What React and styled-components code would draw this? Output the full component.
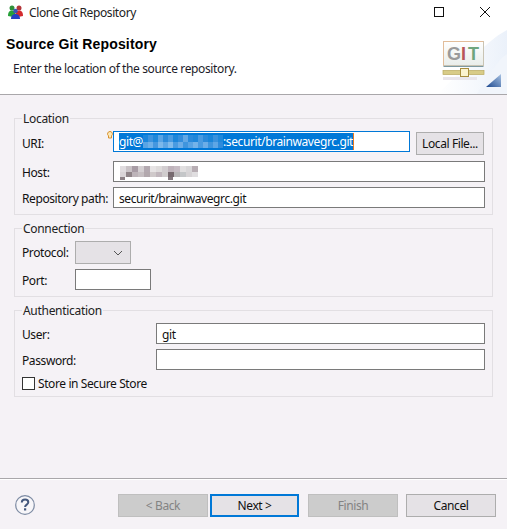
import styled, { createGlobalStyle } from 'styled-components';

const GlobalStyle = createGlobalStyle`
  html, body { margin: 0; padding: 0; background: #f5f2f6; }
  body { font-family: "Noto Sans", "Open Sans", sans-serif; font-size: 12px; color: #111; }
  * { box-sizing: border-box; }
`;

const Window = styled.div`
  width: 507px;
  height: 529px;
  display: flex;
  flex-direction: column;
  background: #f5f2f6;
  overflow: hidden;
`;

const TitleBar = styled.div`
  height: 28px;
  flex: none;
  display: flex;
  align-items: center;
  background: #fff;
  padding: 0 17px 4px 7px;
  gap: 5px;
`;

const TitleText = styled.span`
  font-size: 12px;
  letter-spacing: -0.4px;
  flex: 1;
  color: #222;
`;

const WinControls = styled.div`
  display: flex;
  align-items: center;
  gap: 36px;
`;

const Banner = styled.div`
  position: relative;
  flex: none;
  height: 67px;
  background: #fff;
  border-bottom: 1px solid #a9a7aa;
  padding-top: 7px;
  overflow: hidden;
`;

const BannerTitle = styled.div`
  font-family: "Liberation Sans", Arial, sans-serif;
  font-weight: bold;
  font-size: 14px;
  line-height: 18px;
  letter-spacing: 0.15px;
  color: #000;
  padding-left: 6px;
`;

const BannerText = styled.div`
  font-size: 12px;
  line-height: 16px;
  letter-spacing: -0.38px;
  padding: 8px 0 0 13px;
  color: #1c1c2a;
`;

const BannerArt = styled.svg`
  position: absolute;
  right: 0;
  top: 0;
`;

const Body = styled.div`
  flex: 1;
  display: flex;
  flex-direction: column;
  gap: 5px;
  padding: 15px 14px 0 14px;
`;

const Group = styled.fieldset`
  margin: 0;
  width: 479px;
  border: 1px solid #e2dfe3;
  padding: 0 7px 6px 7px;
  min-width: 0;
`;

const Legend = styled.legend`
  margin-left: 0;
  padding: 1px 1px 0;
  height: 16px;
  font-size: 12px;
  line-height: 16px;
  letter-spacing: -0.3px;
  color: #222;
`;

const Rows = styled.div`
  display: grid;
  grid-template-columns: ${(p) => p.$label}px 1fr;
  row-gap: 5px;
  padding-top: 5px;
`;

const Label = styled.div`
  height: 21px;
  font-size: 12px;
  line-height: ${(p) => (p.$tall ? 26 : 23)}px;
  letter-spacing: -0.4px;
  color: #111;
  white-space: nowrap;
`;

const Input = styled.div`
  position: relative;
  height: 21px;
  width: ${(p) => (p.$width ? `${p.$width}px` : '100%')};
  background: #fff;
  border: 1px solid ${(p) => (p.$focus ? '#0078d7' : '#7a7a7a')};
  padding-left: 5px;
  font-size: 12px;
  line-height: 21px;
  letter-spacing: -0.4px;
  display: flex;
  white-space: nowrap;
  color: #111;
`;

const UriRow = styled.div`
  display: flex;
  align-items: flex-start;
  gap: 6px;
  height: 25px;
`;

const Selected = styled.span`
  display: inline-flex;
  align-items: center;
  margin-top: 1px;
  background: #0078d7;
  color: #fff;
  height: 17px;
  line-height: 18px;
  border-right: 1px solid #e8771d;
`;

const Blur = styled.svg`
  flex: none;
  display: block;
`;

const Bulb = styled.svg`
  position: absolute;
  left: -7px;
  top: -1px;
`;

const Button = styled.div`
  height: 23px;
  width: ${(p) => p.$width}px;
  margin-top: ${(p) => (p.$nudge ? 1 : 0)}px;
  display: flex;
  align-items: center;
  justify-content: center;
  font-size: 12px;
  letter-spacing: -0.4px;
  background: ${(p) => (p.$disabled ? '#cccccc' : '#e5e2e6')};
  color: ${(p) => (p.$disabled ? '#838383' : '#111')};
  border: ${(p) => (p.$default ? '2px solid #0078d7' : `1px solid ${p.$disabled ? '#bfbfbf' : '#adadad'}`)};
`;

const Select = styled.div`
  width: 56px;
  height: 23px;
  background: #e5e2e6;
  border: 1px solid #adadad;
  display: flex;
  align-items: center;
  justify-content: flex-end;
  padding-right: 7px;
`;

const CheckRow = styled.div`
  display: flex;
  align-items: center;
  gap: 3px;
  height: 14px;
  margin-top: 6px;
`;

const CheckBox = styled.div`
  width: 13px;
  height: 13px;
  background: #fff;
  border: 1px solid #333;
`;

const CheckLabel = styled.span`
  font-size: 12px;
  letter-spacing: -0.4px;
  color: #111;
`;

const Footer = styled.div`
  flex: none;
  height: 51px;
  border-top: 1px solid #a9a7aa;
  box-shadow: inset 0 1px 0 #fff;
  display: flex;
  align-items: flex-start;
  padding: 15px 11px 0 15px;
`;

const HelpIcon = styled.svg`
  flex: none;
  margin: 1px 83px 0 0;
`;

const ButtonBar = styled.div`
  display: flex;
  gap: 2px;
`;

const RightButtons = styled.div`
  display: flex;
  gap: 8px;
  margin-left: 9px;
`;

const uriTop = ['#1a86dc','#3d93de','#1f88da','#5aa4e4','#2b8ada','#4a9be1','#1c86da','#338ddc','#62a8e5','#2a8adb','#1f87da','#4a9be1','#2b8ada','#1a85d9','#3a92dd','#1f88da'];
const uriBottom = ['#5aa4e4','#6fb0e8','#4597df','#7db8ea','#5ea6e5','#82bbeb','#4a9be1','#6cade7','#3f95de','#5aa4e4','#74b3e9','#4a9be1','#6cade7','#3f95de','#5ea6e5','#2f8bdb'];
const hostTop = ['#e0dcdf','#c9c2c6','#a89ca5','#d4cfd2','#b3a9b0','#e6e3e4','#dedbdb','#d2cdd0','#bfb3bb','#c7bcc4','#e1dfe0','#d8d6d8','#b8aeb4'];
const hostBottom = ['#d9d4d7','#8f8488','#bdb4b9','#c6bfc2','#b2a8ad','#cfc9ca','#c1b7bd','#d0cccd','#77696f','#b9b6b8','#c4c6c8','#d6d3d5','#e0dee0'];

function UriBlur() {
  return (
    <Blur width="80" height="17" viewBox="0 0 80 17">
      {uriTop.map((c, i) => <rect key={i} x={i * 5} y={2} width={5} height={7} fill={c} />)}
      {uriBottom.map((c, i) => <rect key={i} x={i * 5} y={9} width={5} height={6} fill={c} />)}
    </Blur>
  );
}

function HostBlur() {
  return (
    <Blur width="78" height="19" viewBox="0 0 78 19" style={{ marginLeft: 1 }}>
      {hostTop.map((c, i) => <rect key={i} x={i * 6} y={4} width={6} height={6} fill={c} />)}
      {hostBottom.map((c, i) => <rect key={i} x={i * 6} y={10} width={6} height={5} fill={c} />)}
      <rect x={0} y={15} width={5} height={3} fill="#8d8287" />
      <rect x={48} y={15} width={5} height={3} fill="#85797f" />
    </Blur>
  );
}

function AppIcon() {
  return (
    <svg width="17" height="16" viewBox="0 0 17 16">
      <circle cx="5" cy="4" r="2.5" fill="#2f8f3a" />
      <path d="M1 12c0-4 1.500-5.500 4-5.500s3 1 3.500 3L6 13z" fill="#27a03a" />
      <circle cx="12" cy="4" r="2.500" fill="#b3353a" />
      <path d="M16 12c0-4-1.500-5.500-4-5.500s-3 1-3.500 3L11 13z" fill="#d32a2f" />
      <circle cx="8.500" cy="7" r="2.300" fill="#3c55b8" />
      <path d="M4 15c0-3.500 2-5 4.500-5s4.500 1.500 4.500 5z" fill="#2740c4" />
    </svg>
  );
}

function GitArt() {
  return (
    <BannerArt width="120" height="66" viewBox="0 0 120 66">
      <defs>
        <linearGradient id="wash" x1="0" y1="0.5" x2="1" y2="0.5">
          <stop offset="0" stopColor="#ffffff" />
          <stop offset="0.5" stopColor="#f6f9fd" />
          <stop offset="1" stopColor="#ebf1fa" />
        </linearGradient>
        <linearGradient id="tri" x1="0" y1="1" x2="1" y2="0">
          <stop offset="0" stopColor="#1e4a90" />
          <stop offset="1" stopColor="#a9c3e3" />
        </linearGradient>
        <linearGradient id="card" x1="0" y1="0" x2="0" y2="1">
          <stop offset="0" stopColor="#ffffff" />
          <stop offset="1" stopColor="#e9edea" />
        </linearGradient>
      </defs>
      <path d="M50 66C75 45 95 15 120 2V66Z" fill="url(#wash)" />
      <path d="M90 66C100 50 110 32 120 26V66Z" fill="#f1f5fb" />
      <rect x="56.500" y="13.500" width="40" height="24" fill="url(#card)" stroke="#c9c4b4" />
      <path d="M56.500 37.500V13.500H96.500" fill="none" stroke="#e2bd9a" />
      <path d="M56.500 38.500H96.500" stroke="#7e99a0" />
      <text x="60" y="32" fontFamily="Liberation Sans, sans-serif" fontWeight="bold" fontSize="18" fill="#9a9a9a">G</text>
      <text x="74" y="32" fontFamily="Liberation Sans, sans-serif" fontWeight="bold" fontSize="18" fill="#b8555a">I</text>
      <text x="81" y="32" fontFamily="Liberation Sans, sans-serif" fontWeight="bold" fontSize="18" fill="#6fa57d">T</text>
      <rect x="56" y="42.500" width="41" height="4" fill="#d8cc88" stroke="#b9aa5e" strokeWidth="0.700" />
      <rect x="73.500" y="40.500" width="8" height="8" fill="#fbf3cf" stroke="#a78d3e" />
      <rect x="56" y="49" width="34" height="3" fill="#e9e6ec" />
      <path d="M99 59 L114 46 V59 Z" fill="url(#tri)" />
    </BannerArt>
  );
}

export default function App() {
  return (
    <Window>
      <GlobalStyle />
      <TitleBar>
        <AppIcon />
        <TitleText>Clone Git Repository</TitleText>
        <WinControls>
          <svg width="10" height="10" viewBox="0 0 10 10">
            <rect x="0.500" y="0.500" width="9" height="9" fill="none" stroke="#111" />
          </svg>
          <svg width="10" height="10" viewBox="0 0 10 10">
            <path d="M0 0L10 10M10 0L0 10" stroke="#111" strokeWidth="1" />
          </svg>
        </WinControls>
      </TitleBar>

      <Banner>
        <GitArt />
        <BannerTitle>Source Git Repository</BannerTitle>
        <BannerText>Enter the location of the source repository.</BannerText>
      </Banner>

      <Body>
        <Group>
          <Legend>Location</Legend>
          <Rows $label={91}>
            <Label $tall>URI:</Label>
            <UriRow>
              <Input $focus $width={297}>
                <Bulb width="6" height="9" viewBox="0 0 6 9">
                  <path d="M3 .5a2.400 2.400 0 0 1 1.500 4.300V7H1.500V4.800A2.400 2.400 0 0 1 3 .5z" fill="#fbe9b8" stroke="#d8902e" />
                </Bulb>
                <Selected>git@<UriBlur />:securit/brainwavegrc.git</Selected>
              </Input>
              <Button $nudge $width={68}>Local File...</Button>
            </UriRow>
            <Label>Host:</Label>
            <Input><HostBlur /></Input>
            <Label>Repository path:</Label>
            <Input>securit/brainwavegrc.git</Input>
          </Rows>
        </Group>

        <Group>
          <Legend>Connection</Legend>
          <Rows $label={53}>
            <Label>Protocol:</Label>
            <Select>
              <svg width="10" height="6" viewBox="0 0 10 6">
                <path d="M1 1L5 5L9 1" fill="none" stroke="#555" />
              </svg>
            </Select>
            <Label>Port:</Label>
            <Input $width={76} />
          </Rows>
        </Group>

        <Group>
          <Legend>Authentication</Legend>
          <Rows $label={134}>
            <Label>User:</Label>
            <Input>git</Input>
            <Label>Password:</Label>
            <Input />
          </Rows>
          <CheckRow>
            <CheckBox />
            <CheckLabel>Store in Secure Store</CheckLabel>
          </CheckRow>
        </Group>
      </Body>

      <Footer>
        <HelpIcon width="20" height="20" viewBox="0 0 20 20">
          <circle cx="10" cy="10" r="9.300" fill="#f7f6f9" stroke="#7d8ba3" strokeWidth="1.200" />
          <path d="M6.800 7.600c0-2 1.500-3 3.300-3s3.200 1 3.200 2.700c0 2.300-3.200 2.300-3.200 4.700" fill="none" stroke="#45597e" strokeWidth="2" />
          <rect x="9" y="13.300" width="2.200" height="2.200" fill="#45597e" />
        </HelpIcon>
        <ButtonBar>
          <Button $disabled $width={90}>&lt; Back</Button>
          <Button $default $width={89}>Next &gt;</Button>
        </ButtonBar>
        <RightButtons>
          <Button $disabled $width={90}>Finish</Button>
          <Button $width={90}>Cancel</Button>
        </RightButtons>
      </Footer>
    </Window>
  );
}
